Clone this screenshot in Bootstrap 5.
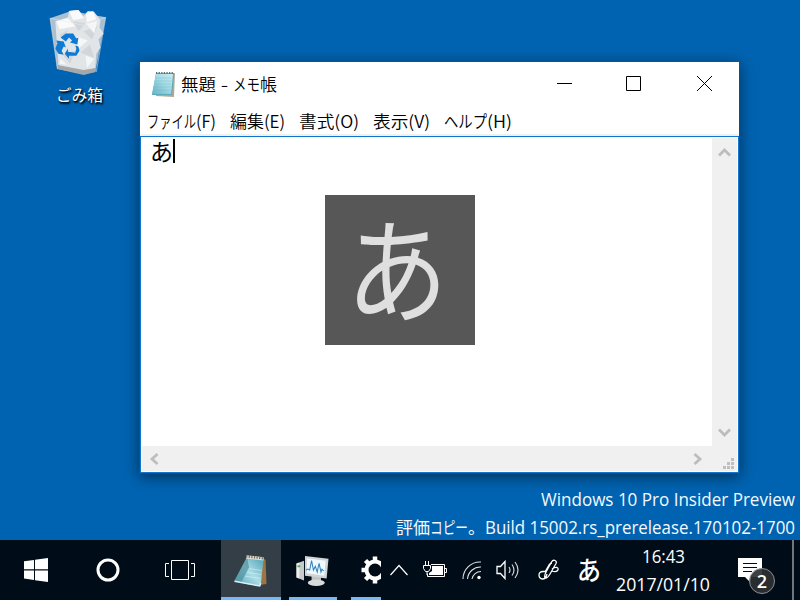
<!DOCTYPE html>
<html lang="ja">
<head>
<meta charset="utf-8">
<meta name="viewport" content="width=device-width, initial-scale=1">
<title>無題 - メモ帳</title>
<link href="https://cdn.jsdelivr.net/npm/bootstrap@5.3.0/dist/css/bootstrap.min.css" rel="stylesheet">
<style>
  body { width: 800px; height: 600px; background: #0063b1; font-family: "Open Sans", "Noto Sans CJK JP", sans-serif; color: #000; }
  svg { display: block; flex: none; }
  .jp { font-family: "Noto Sans CJK JP", sans-serif; }
  .fit { display: inline-block; white-space: nowrap; transform-origin: 0 50%; }
  .desktop { height: 540px; }
  .bin { left: 41px; top: 7px; width: 76px; color: #fff; text-shadow: 1px 1px 2px #000, 1px 2px 2px rgba(0,0,0,.7); }
  .bin svg { margin-left: 2px; }
  .bin-label { font-size: 16px; line-height: 24px; margin-top: 6px; }
  .win { left: 140px; top: 62px; width: 599px; height: 411px; background: #fff; box-shadow: 0 0 0 1px rgba(0,90,165,.6), 0 3px 14px 1px rgba(0,0,0,.48); }
  .titlebar { height: 43px; padding-left: 11px; }
  .title-text { font-size: 17px; line-height: 24px; margin-left: 5px; font-weight: 350; }
  .caption { width: 70px; height: 43px; }
  .menus { height: 29px; padding: 1px 0 0 7px; font-size: 17px; line-height: 29px; font-weight: 350; }
  .strip { height: 2px; background: #f0f0f0; }
  .editor { height: 337px; border: 1px solid #0f76d0; border-bottom-width: 1.5px; padding: 1px; }
  .page { height: 308px; padding: 0 0 0 8px; }
  .typed { font-size: 24px; line-height: 26px; }
  .caret { width: 2px; height: 24px; background: #000; margin-top: 1px; }
  .vbar { width: 25px; background: #f0f0f0; padding: 10px 0 9px; }
  .hbar { height: 25px; background: #f0f0f0; padding: 0 2px 0 7px; }
  .ime { left: 325px; top: 195px; width: 150px; height: 150px; background: #575757; color: #dfdfdf; padding-right: 6px; }
  .ime .fit { font-size: 115px; line-height: 138px; }
  .mark-text { right: 5px; bottom: -1px; color: #f4f9ff; font-size: 17.5px; line-height: 28px; }
  .taskbar { height: 60px; background: #000d18; color: #fff; z-index: 1; }
  .task-btn { height: 60px; }
  .running { border-bottom: 3px solid #76b9f5; }
  .active-task { background: #333e47; }
  .clock { width: 100px; font-size: 17.5px; line-height: 28px; }
  .show-desk { width: 8px; border-left: 2px solid #6f767c; }
  .count { width: 26px; height: 26px; font-size: 18px; line-height: 24px; font-weight: 600; background: rgba(45,48,51,.92); border: 1px solid #8b8f92; }
</style>
</head>
<body class="m-0 overflow-hidden d-flex flex-column">
<main class="desktop position-relative">
  <div class="bin position-absolute d-flex flex-column align-items-center">
    <svg width="62" height="69" viewBox="1 0 59 68" preserveAspectRatio="none">
      <path d="M2 11L22 4 55 10 45 64 34 66 9 61z" fill="#a9bfd2"/>
      <path d="M7 14L19 10 20 4 29 3 34 9 38 4 44 5 50 13 49 20 53 26 48 32 50 40 46 46 45 60 34 63 10 58z" fill="#e2e5e8"/>
      <path d="M20 4l9-1 5 8-10 2zM36 6l7-2 3 8-9 3zM8 14l11-3 7 8-15 3z" fill="#fafafa"/>
      <path d="M24 14l12 2-7 8zM34 24l13-5-5 13zM14 47l12-4-5 13zM31 45l9-8 4 13zM11 27l8-4-5 9z" fill="#d2d6da"/>
      <path d="M36 16l11-2-3 12zM28 29l10 4-10 9zM36 48l8 3-7 9zM12 51l6 6-7-1z" fill="#f5f6f7"/>
      <path d="M8 57l26 5 12-2-1 4-11 3-25-6z" fill="#a6a7a8"/>
      <path d="M2 11l32 7 21-8M2 11l7 50M55 10l-9 54" fill="none" stroke="#e7edf2" stroke-width="1" opacity=".5"/>
      <g fill="#0d7bd4"><path d="M12 30l5-4h7l3 5 2-1-1 7-7-2 2-2-3-3-3 4z"/><path d="M8 33l7 1 2 6-2-1-2 4 2 4-5-1-3-5 2-5z"/><path d="M19 41v3l7 1 1-4-1-3 3 1 1 4-3 5-7 0v3l-4-5z"/></g>
    </svg>
    <div class="bin-label jp"><span class="fit" data-w="47">ごみ箱</span></div>
  </div>

  <section class="win position-absolute d-flex flex-column">
    <header class="titlebar d-flex align-items-center">
      <svg width="25" height="28" viewBox="0 0 25 28">
        <path d="M5 3h19l-1 24-18-1z" fill="#b3a894"/>
        <path d="M5 3h18l-2 22H1z" fill="#5fa9bd"/>
        <path d="M5 4h17l-2 20H1z" fill="url(#padA)"/>
        <path d="M5 8h16M4.500 11h16M4 14h16M3 17h17M2.500 20h17" stroke="#5ba9bd" stroke-width=".7" opacity=".4"/>
        <path d="M5 3h18" stroke="#5e727c" stroke-width="2" stroke-dasharray="1.300 1.300"/>
        <defs><linearGradient id="padA" x1="0" x2="1" y1="1" y2="0"><stop stop-color="#65b3c6"/><stop offset=".55" stop-color="#a5dbe5"/><stop offset="1" stop-color="#c9edf2"/></linearGradient></defs>
      </svg>
      <div class="title-text jp flex-grow-1"><span class="fit" data-w="35">無題</span><span class="fit" data-w="17">&nbsp;-&nbsp;</span><span class="fit" data-w="27">メモ</span><span class="fit" data-w="17">帳</span></div>
      <div class="caption d-flex align-items-center justify-content-center"><svg width="15" height="15"><path d="M0 7.500h15" stroke="#000"/></svg></div>
      <div class="caption d-flex align-items-center justify-content-center pe-0"><svg class="me-1" width="15" height="15" style="margin-left:2px"><path d="M.5.5h14v14H.5z" fill="none" stroke="#000"/></svg></div>
      <div class="caption d-flex align-items-center justify-content-center"><svg width="15" height="15"><path d="M0 0l15 15M15 0L0 15" stroke="#000"/></svg></div>
    </header>
    <nav class="menus d-flex jp">
      <div><span class="fit" data-w="49">ファイル</span><span class="fit" data-w="20">(F)</span></div>
      <div style="margin-left:14px"><span class="fit" data-w="55">編集(E)</span></div>
      <div style="margin-left:14px"><span class="fit" data-w="60">書式(O)</span></div>
      <div style="margin-left:14px"><span class="fit" data-w="57">表示(V)</span></div>
      <div style="margin-left:14px"><span class="fit" data-w="43">ヘルプ</span><span class="fit" data-w="25">(H)</span></div>
    </nav>
    <div class="strip"></div>
    <div class="editor d-flex flex-column">
      <div class="d-flex">
        <div class="page jp flex-grow-1 d-flex align-items-start"><span class="typed fit" data-w="23">あ</span><span class="caret"></span></div>
        <div class="vbar d-flex flex-column align-items-center justify-content-between">
          <svg width="13" height="9" viewBox="0 0 13 9"><path d="M1 7.500L6.500 2 12 7.500" fill="none" stroke="#bdbdbd" stroke-width="2.800"/></svg>
          <svg width="13" height="9" viewBox="0 0 13 9"><path d="M1 1.500L6.500 7 12 1.500" fill="none" stroke="#bdbdbd" stroke-width="2.800"/></svg>
        </div>
      </div>
      <div class="hbar d-flex align-items-center">
        <svg width="10" height="12" viewBox="0 0 10 12"><path d="M8.500 1L3 6l5.500 5" fill="none" stroke="#bdbdbd" stroke-width="2.800"/></svg>
        <svg class="ms-auto" width="10" height="12" viewBox="0 0 10 12"><path d="M1.500 1L7 6l-5.500 5" fill="none" stroke="#bdbdbd" stroke-width="2.800"/></svg>
        <svg class="align-self-end ms-3" style="margin-bottom:2px" width="16" height="11" viewBox="0 0 16 11"><path d="M12 0h3v3h-3zM8 4h3v3H8zM12 4h3v3h-3zM4 8h3v3H4zM8 8h3v3H8zM12 8h3v3h-3z" fill="#bfbfbf"/></svg>
      </div>
    </div>
  </section>

  <div class="ime jp position-absolute d-flex justify-content-center"><span class="fit" data-w="102">あ</span></div>

  <div class="mark-text position-absolute text-end">
    <div><span class="fit" data-w="254">Windows 10 Pro Insider Preview</span></div>
    <div><span class="fit jp" data-w="34">評価</span><span class="fit jp" data-w="38">コピー</span><span class="fit jp" data-w="17">。</span><span class="fit" data-w="310">Build 15002.rs_prerelease.170102-1700</span></div>
  </div>
</main>

<footer class="taskbar d-flex position-relative">
  <div class="task-btn d-flex align-items-center justify-content-center" style="width:72px"><svg width="24" height="24"><path d="M0 3.300L10 2v9.300H0zM11 1.800L24 0v11.300H11zM0 12.500h10V22L0 20.600zM11 12.500h13V24l-13-1.800z" fill="#fff"/></svg></div>
  <div class="task-btn d-flex align-items-center justify-content-center" style="width:72px"><svg width="24" height="24"><circle cx="12" cy="12" r="10" fill="none" stroke="#fff" stroke-width="3"/></svg></div>
  <div class="task-btn d-flex align-items-center justify-content-center" style="width:72px"><svg width="30" height="20"><path d="M6.500.5h17v19h-17zM4 3.500H.5v13H4M26 3.500h3.500v13H26" fill="none" stroke="#fff"/></svg></div>
  <div class="task-btn running active-task d-flex align-items-center" style="width:60px;margin-left:5px;padding:3px 0 0 12px">
    <svg width="34" height="33" viewBox="0 0 34 34">
      <path d="M29 4l4 2 1 25-7 1z" fill="#9c7543"/>
      <path d="M14 3l17 2-3 28-12-1.500-15-3.500z" fill="url(#padB)"/>
      <path d="M14 3L1 27l7 2 8-15z" fill="#4f8e9e" opacity=".7"/>
      <path d="M1 28l26 5 1-3" fill="none" stroke="#ddeef2" stroke-width="1.500"/>
      <path d="M13 3l18 2" stroke="#dedbd0" stroke-width="3.500"/>
      <path d="M13 2.500l18 2" stroke="#6d6860" stroke-width="2.300" stroke-dasharray="1.200 1.500"/>
      <path d="M16 15l13 2M14 19l14 2M12 23l16 2" stroke="#e4f6fa" stroke-width="1" opacity=".5"/>
      <defs><linearGradient id="padB" x1="0" x2="1" y1="1" y2="0"><stop stop-color="#4aa7bb"/><stop offset=".5" stop-color="#acdde6"/><stop offset="1" stop-color="#4ca0b4"/></linearGradient></defs>
    </svg>
  </div>
  <div class="task-btn running d-flex align-items-center justify-content-center" style="width:48px;margin-left:8px;padding:5px 1px 0 0">
    <svg width="35" height="32" viewBox="0 0 36 34">
      <path d="M1 9l8-3v21l-8-3z" fill="#c7cbcd"/><path d="M1 9l3-1v17l-3-1z" fill="#eee"/><path d="M2 12h3" stroke="#37ba41" stroke-width="2"/>
      <path d="M17 22h10v7H17z" fill="#bfc2c3"/>
      <path d="M10 1l25 3-2 21-23-3z" fill="#d1d4d6"/>
      <path d="M12 3.500l20 2.500-1.500 16-18.500-2.500z" fill="#eef9ff"/>
      <path d="M11 16l2-1 2 1 2-10 2 10 2-4 2 6 2-9 2 9 1-3 2 2" fill="none" stroke="#3182bd" stroke-width="1.100"/>
      <ellipse cx="22" cy="29.500" rx="9" ry="3.500" fill="#d9dada"/>
    </svg>
  </div>
  <div class="task-btn running d-flex align-items-center justify-content-end overflow-hidden" style="width:30px;margin-left:14px;padding-top:3px">
    <svg width="21" height="28" viewBox="0 0 21 28"><circle cx="15" cy="14" r="8.500" fill="none" stroke="#fff" stroke-width="4"/><path d="M15 14L1.500 14M15 14L5.500 4.500M15 14L5.500 23.500M15 14V.5M15 14v13.500M15 14l9.500-9.500M15 14l9.500 9.500" stroke="#fff" stroke-width="4.500"/><circle cx="15" cy="14" r="6.500" fill="#000d18"/></svg>
  </div>
  <div class="task-btn d-flex align-items-center" style="margin-left:9px">
    <svg width="18" height="12"><path d="M.5 11L9 1.500 17.500 11" fill="none" stroke="#fff" stroke-width="1.200"/></svg>
    <svg style="margin-left:15px" width="24" height="18" viewBox="0 0 24 18"><path d="M8 3.500h13.500v12h-17v-3M22 7.500h1.500v4H22" fill="none" stroke="#fff"/><path d="M9 5h11v9H6v-2l3-2z" fill="#fff"/><path d="M2.500 0v4M5.500 0v4M.5 4.500h7v3l-2 3h-3l-2-3zM4 10v4" fill="none" stroke="#fff"/></svg>
    <svg style="margin-left:15px" width="20" height="20" viewBox="0 0 20 20"><g fill="none" stroke="#dfe2e4" stroke-width="1.100"><path d="M1 19A17 17 0 0 1 19 2"/><path d="M5.500 19A13 13 0 0 1 19 7"/><path d="M10 19a9 9 0 0 1 9-7.500"/></g><circle cx="17" cy="17.500" r="1.700" fill="#fff"/></svg>
    <svg style="margin-left:14px" width="24" height="20" viewBox="0 0 24 20"><path d="M1 6.500h3.500L9 1.500v17l-4.500-5H1z" fill="none" stroke="#fff" stroke-width="1.300"/><path d="M13 7q2 3 0 6M16 4.500q4 5.500 0 11M19 2q6 8 0 16" fill="none" stroke="#cfd3d5" stroke-width="1.200"/></svg>
    <svg style="margin-left:18px" width="22" height="22" viewBox="0 0 22 22"><path d="M8 12.500H5q-4 0-4 3.500t3.500 4Q8 20 9 15M7 19q-1-2 1-6l5.500-10Q15 .5 17 1.500t1 3L12 15q-3 5-5 4M7 13l4-7q1.500-2 3-2M14 10q3-2 5-1.500 2 1 .5 3Q18 13.500 14 12" fill="none" stroke="#fff" stroke-width="1.300"/></svg>
  </div>
  <div class="task-btn jp d-flex align-items-center" style="margin-left:17px;font-size:26px;line-height:57px;font-weight:500;padding-bottom:3px"><span class="fit" data-w="24">あ</span></div>
  <div class="clock text-center" style="margin-left:12px;padding-top:2px"><div><span class="fit" data-w="43">16:43</span></div><div><span class="fit" data-w="94">2017/01/10</span></div></div>
  <div class="task-btn position-relative" style="margin-left:25px;padding-top:18px">
    <svg width="24" height="26"><path d="M0 0h24v19H13v6l-6-6H0z" fill="#fff"/><path d="M5 5.500h14M5 9.500h14M5 13.500h9" stroke="#000d18"/></svg>
    <span class="count position-absolute rounded-circle text-center" style="left:11px;top:28px">2</span>
  </div>
  <div class="show-desk ms-auto"></div>
</footer>

<script src="https://cdn.jsdelivr.net/npm/bootstrap@5.3.0/dist/js/bootstrap.bundle.min.js"></script>
<script>
  // Condense or widen each label to its own column width.
  document.querySelectorAll('.fit').forEach(function (el) {
    var natural = el.getBoundingClientRect().width;
    el.style.width = el.dataset.w + 'px';
    el.style.transform = 'scaleX(' + el.dataset.w / natural + ')';
    el.style.textAlign = 'left';
  });
</script>
</body>
</html>
